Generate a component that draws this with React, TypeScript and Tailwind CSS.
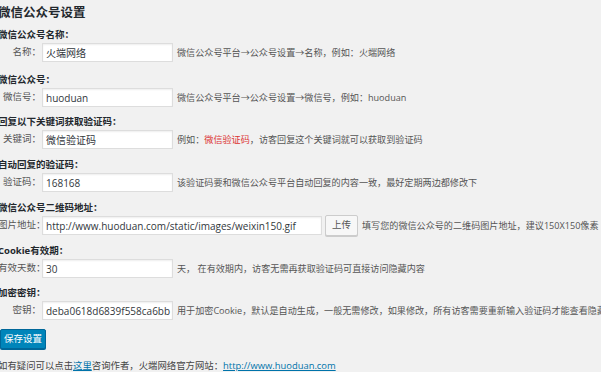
import React from "react";

const font = { fontFamily: '"Open Sans", "Noto Sans CJK SC", sans-serif' };

function Heading({ children }: { children: React.ReactNode }) {
  return (
    <div className="h-[14px] leading-[14px] text-[9.5px] font-bold text-[#23282d] whitespace-nowrap">
      {children}
    </div>
  );
}

function Field({ value, w = "w-[131px]" }: { value: string; w?: string }) {
  return (
    <input
      readOnly
      defaultValue={value}
      className={`${w} ml-[1px] h-[19px] shrink-0 border border-[#ddd] bg-white pl-[3px] pr-[1px] text-[10px] text-[#32373c] shadow-[inset_0_1px_2px_rgba(0,0,0,0.07)] outline-none`}
    />
  );
}

function Row({ label, children }: { label: string; children: React.ReactNode }) {
  return (
    <div className="mt-[1px] flex h-[19px] items-center whitespace-nowrap">
      <div className="w-[43px] shrink-0 text-right text-[9.5px] text-[#555]">{label}</div>
      {children}
    </div>
  );
}

function Desc({ children }: { children: React.ReactNode }) {
  return <div className="ml-[4px] text-[9.1px] text-[#555] whitespace-nowrap">{children}</div>;
}

export default function App() {
  return (
    <div className="h-[372px] w-[601px] overflow-hidden bg-[#f1f1f1] text-[#444]" style={font}>
      <div className="ml-[-2px] pt-[3px]">
        <h1 className="mb-[5px] h-[20px] leading-[20px] text-[12.5px] font-bold text-[#23282d]">微信公众号设置</h1>

        <div className="mb-[11px]">
          <Heading>微信公众号名称：</Heading>
          <Row label="名称：">
            <Field value="火端网络" />
            <Desc>微信公众号平台→公众号设置→名称，例如：火端网络</Desc>
          </Row>
        </div>

        <div className="mb-[8px]">
          <Heading>微信公众号：</Heading>
          <Row label="微信号：">
            <Field value="huoduan" />
            <Desc>微信公众号平台→公众号设置→微信号，例如：huoduan</Desc>
          </Row>
        </div>

        <div className="mb-[9px]">
          <Heading>回复以下关键词获取验证码：</Heading>
          <Row label="关键词：">
            <Field value="微信验证码" />
            <Desc>
              例如：<span className="text-[#dc3232]">微信验证码</span>，访客回复这个关键词就可以获取到验证码
            </Desc>
          </Row>
        </div>

        <div className="mb-[9px]">
          <Heading>自动回复的验证码：</Heading>
          <Row label="验证码：">
            <Field value="168168" />
            <Desc>该验证码要和微信公众号平台自动回复的内容一致，最好定期两边都修改下</Desc>
          </Row>
        </div>

        <div className="mb-[9px]">
          <Heading>微信公众号二维码地址：</Heading>
          <Row label="图片地址：">
            <Field value="http://www.huoduan.com/static/images/weixin150.gif" w="w-[280px]" />
            <button className="ml-[3px] h-[21px] w-[33px] shrink-0 rounded-[2px] border border-[#ccc] bg-[#f7f7f7] text-[9.5px] text-[#555] shadow-[0_1px_0_#ccc]">
              上传
            </button>
            <Desc>填写您的微信公众号的二维码图片地址，建议150X150像素</Desc>
          </Row>
        </div>

        <div className="mb-[8px]">
          <Heading>Cookie有效期：</Heading>
          <Row label="有效天数：">
            <Field value="30" />
            <Desc>天，&nbsp;在有效期内，访客无需再获取验证码可直接访问隐藏内容</Desc>
          </Row>
        </div>

        <div className="mb-[9px]">
          <Heading>加密密钥：</Heading>
          <Row label="密钥：">
            <Field value="deba0618d6839f558ca6bb" />
            <Desc>用于加密Cookie，默认是自动生成，一般无需修改，如果修改，所有访客需要重新输入验证码才能查看隐藏内容</Desc>
          </Row>
        </div>

        <button className="ml-[2px] block h-[20px] w-[46px] rounded-[2px] border border-[#006799] bg-[#0085ba] text-[9.5px] text-white shadow-[0_1px_0_#006799]">
          保存设置
        </button>

        <div className="mt-[10px] h-[14px] leading-[14px] whitespace-nowrap text-[9.4px] text-[#444]">
          如有疑问可以点击<span className="text-[#0073aa] underline">这里</span>咨询作者，火端网络官方网站：
          <span className="text-[#0073aa] underline">http://www.huoduan.com</span>
        </div>
      </div>
    </div>
  );
}
